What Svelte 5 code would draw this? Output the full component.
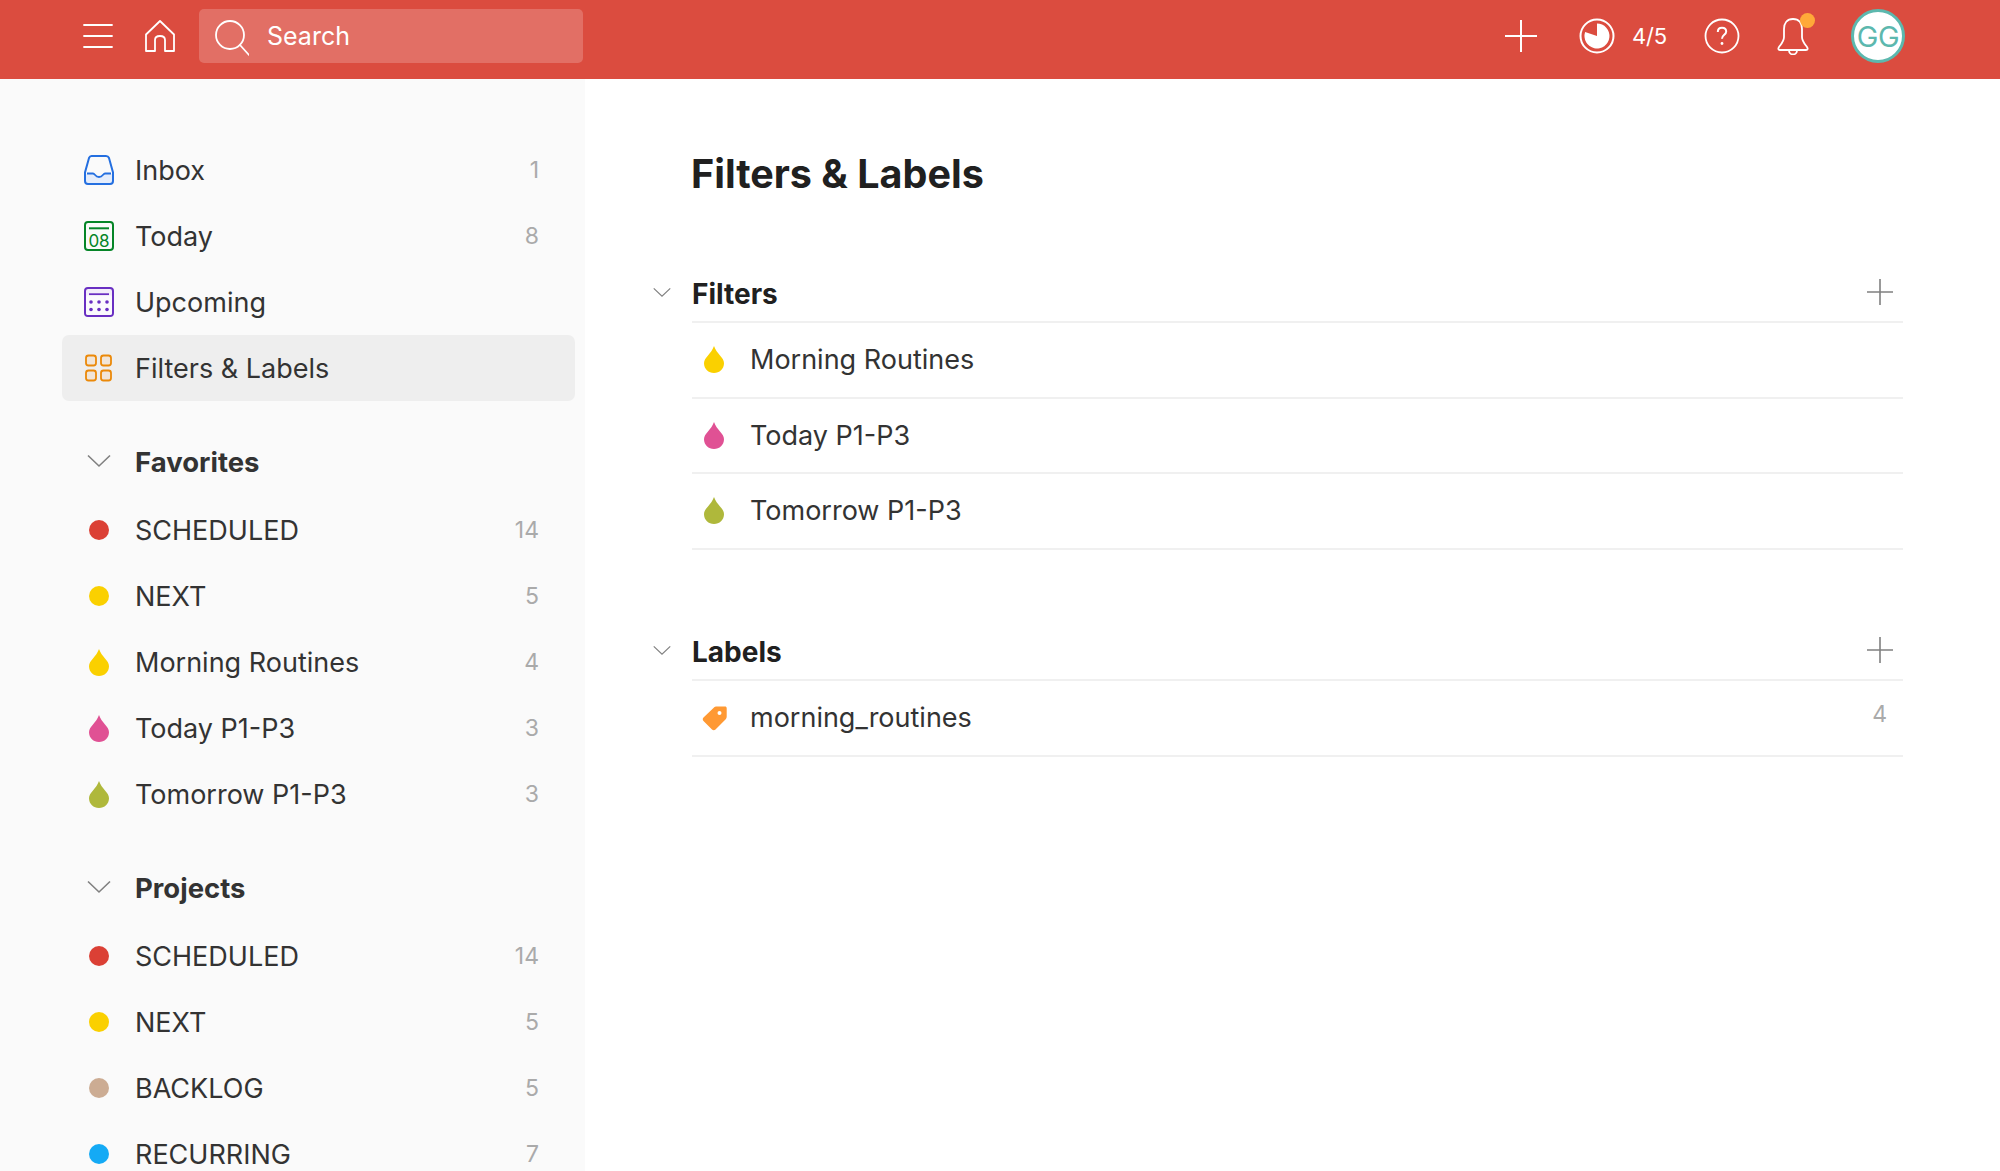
<script>
  const favorites = [
    { name: "SCHEDULED", color: "#db4035", shape: "dot", count: 14 },
    { name: "NEXT", color: "#fad000", shape: "dot", count: 5 },
    { name: "Morning Routines", color: "#fad000", shape: "drop", count: 4 },
    { name: "Today P1-P3", color: "#e05194", shape: "drop", count: 3 },
    { name: "Tomorrow P1-P3", color: "#afb83b", shape: "drop", count: 3 },
  ];
  const projects = [
    { name: "SCHEDULED", color: "#db4035", shape: "dot", count: 14 },
    { name: "NEXT", color: "#fad000", shape: "dot", count: 5 },
    { name: "BACKLOG", color: "#ccac93", shape: "dot", count: 5 },
    { name: "RECURRING", color: "#14aaf5", shape: "dot", count: 7 },
  ];
  const filters = [
    { name: "Morning Routines", color: "#fad000" },
    { name: "Today P1-P3", color: "#e05194" },
    { name: "Tomorrow P1-P3", color: "#afb83b" },
  ];
  const groups = [
    { title: "Favorites", items: favorites },
    { title: "Projects", items: projects },
  ];
</script>

{#snippet drop(color)}
  <svg class="drop" viewBox="0 0 20 27" fill={color}>
    <path d="M10 0C11.5 4 13.6 6.6 16 9.4 18.4 12.2 20 14.200 20 17.200 20 22.800 15.500 27 10 27 4.500 27 0 22.800 0 17.200 0 14.200 1.600 12.200 4 9.400 6.400 6.600 8.500 4 10 0Z" />
  </svg>
{/snippet}

{#snippet chevron()}
  <svg class="chev" viewBox="0 0 24 14" fill="none" stroke="#808080" stroke-width="1.600">
    <path d="M1 1.500l11 10.500 11-10.500" />
  </svg>
{/snippet}

{#snippet plus(cls, color)}
  <svg class={cls} viewBox="0 0 26 26" fill="none" stroke={color} stroke-width="1.600">
    <path d="M13 0v26M0 13h26" />
  </svg>
{/snippet}

<div class="app">
  <header class="topbar">
    <svg class="hamburger" viewBox="0 0 30 26" fill="none" stroke="#fff" stroke-width="1.800" stroke-linecap="round">
      <path d="M1 2h28M1 13h28M1 24h28" />
    </svg>
    <svg class="home" viewBox="0 0 30 32" fill="none" stroke="#fff" stroke-width="1.800" stroke-linejoin="round">
      <path d="M1 14.500L15 1l14 13.500V31H20V20c0-2.500-2-4-5-4s-5 1.500-5 4v11H1z" />
    </svg>
    <div class="search">
      <svg class="search-icon" viewBox="0 0 34 36" fill="none" stroke="#fff" stroke-width="1.800" stroke-linecap="round">
        <circle cx="15" cy="15" r="14" />
        <path d="M25 25l9 10" />
      </svg>
      <span>Search</span>
    </div>
    <div class="top-right">
      {@render plus("top-plus", "#fff")}
      <svg class="progress" viewBox="0 0 36 36">
        <circle cx="18" cy="18" r="16.500" fill="none" stroke="#fff" stroke-width="2" />
        <path d="M18 18V5.500A12.500 12.500 0 1 1 6.100 14.100z" fill="#fff" />
      </svg>
      <span class="karma">4/5</span>
      <svg class="help" viewBox="0 0 36 36">
        <circle cx="18" cy="18" r="16.500" fill="none" stroke="#fff" stroke-width="1.800" />
        <path d="M13.800 14c0-2.700 1.800-4.200 4.200-4.200 2.500 0 4.200 1.500 4.200 3.700 0 3.400-4.200 3.300-4.200 7.300" fill="none" stroke="#fff" stroke-width="2" />
        <circle cx="18" cy="25.500" r="1.400" fill="#fff" />
      </svg>
      <div class="bell-wrap">
        <svg class="bell" viewBox="0 0 34 38" fill="none" stroke="#fff" stroke-width="1.800" stroke-linejoin="round">
          <path d="M17 2c-6 0-9 4-9 10v8c0 4-2 6-5 10-1 1.500-1 3 1 3h26c2 0 2-1.500 1-3-3-4-5-6-5-10v-8c0-6-3-10-9-10z" />
          <path d="M13 33.500c0 2.500 2 4 4 4s4-1.500 4-4" />
        </svg>
        <span class="bell-dot"></span>
      </div>
      <div class="avatar">GG</div>
    </div>
  </header>

  <div class="body">
    <aside class="sidebar">
      <nav class="primary">
        <div class="row">
          <svg class="nav-icon" viewBox="0 0 32 32">
            <path d="M3 20h7c1.500 0 2 3.200 6 3.200s4.500-3.200 6-3.200h7v7c0 1.500-1 3-3 3H5c-2 0-2-1.500-2-3z" fill="#e5edfb" />
            <path d="M8.500 2h14.500c1.500 0 2.500.8 3 2l4 14.500V27c0 2-1.500 3-3 3H5c-1.500 0-3-1-3-3v-8.500L6 4c.5-1.200 1-2 2.500-2z" fill="none" stroke="#246fe0" stroke-width="2" />
            <path d="M4 19.500h6c2 0 2 3.500 6 3.500s4-3.500 6-3.500h6" fill="none" stroke="#246fe0" stroke-width="1.800" />
          </svg>
          <span class="label">Inbox</span><span class="count">1</span>
        </div>
        <div class="row">
          <svg class="nav-icon" viewBox="0 0 32 32">
            <rect x="2" y="2" width="28" height="28" rx="3" fill="none" stroke="#058527" stroke-width="2" />
            <path d="M6 8.300h20" stroke="#058527" stroke-width="2" />
            <text x="16" y="26.500" text-anchor="middle" class="cal-num">08</text>
          </svg>
          <span class="label">Today</span><span class="count">8</span>
        </div>
        <div class="row">
          <svg class="nav-icon" viewBox="0 0 32 32">
            <rect x="2" y="2" width="28" height="28" rx="3" fill="#f3eefa" stroke="#692fc2" stroke-width="2" />
            <path d="M6 8.300h20" stroke="#692fc2" stroke-width="2" />
            <rect x="3" y="9.300" width="26" height="19.700" rx="2" fill="#fbfafd" />
            <g fill="#692fc2">
              <circle cx="8" cy="16" r="1.800" /><circle cx="16" cy="16" r="1.800" /><circle cx="24" cy="16" r="1.800" />
              <circle cx="8" cy="23.500" r="1.800" /><circle cx="16" cy="23.500" r="1.800" /><circle cx="24" cy="23.500" r="1.800" />
            </g>
          </svg>
          <span class="label">Upcoming</span><span class="count"></span>
        </div>
        <div class="row selected">
          <svg class="nav-icon" viewBox="0 0 32 32" fill="#f1e5d8" stroke="#eb8909" stroke-width="1.800">
            <rect x="3" y="3.500" width="10" height="10" rx="2.500" /><rect x="18" y="3.500" width="10" height="10" rx="2.500" />
            <rect x="3" y="18.500" width="10" height="10" rx="2.500" /><rect x="18" y="18.500" width="10" height="10" rx="2.500" />
          </svg>
          <span class="label">Filters &amp; Labels</span><span class="count"></span>
        </div>
      </nav>

      {#each groups as group}
        <section class="group">
          <div class="row group-head">
            <span class="icon-slot">{@render chevron()}</span>
            <span class="label strong">{group.title}</span>
          </div>
          {#each group.items as item}
            <div class="row">
              <span class="icon-slot">
                {#if item.shape === "dot"}
                  <span class="dot" style="background:{item.color}"></span>
                {:else}
                  {@render drop(item.color)}
                {/if}
              </span>
              <span class="label">{item.name}</span>
              <span class="count">{item.count}</span>
            </div>
          {/each}
        </section>
      {/each}
    </aside>

    <main class="main">
      <h1>Filters &amp; Labels</h1>

      <section class="panel">
        <div class="panel-head">
          <span class="panel-chev">{@render chevron()}</span>
          <h2>Filters</h2>
          {@render plus("panel-plus", "#808080")}
        </div>
        {#each filters as f}
          <div class="item">
            <span class="item-icon">{@render drop(f.color)}</span>
            <span class="item-name">{f.name}</span>
          </div>
        {/each}
      </section>

      <section class="panel">
        <div class="panel-head">
          <span class="panel-chev">{@render chevron()}</span>
          <h2>Labels</h2>
          {@render plus("panel-plus", "#808080")}
        </div>
        <div class="item">
          <span class="item-icon">
            <svg class="tag" viewBox="0 0 26 26">
              <path d="M1.500 12.500L12 2.500c.8-.8 1.600-1 2.600-1H23c1 0 1.700.7 1.700 1.700v8.500c0 1-.3 1.800-1 2.500L13.500 24.500c-1 1-2.500 1-3.500 0l-8.500-8.500c-1-1-1-2.500 0-3.500z" fill="#ff9933" />
              <circle cx="17.500" cy="8" r="2" fill="#fff" />
            </svg>
          </span>
          <span class="item-name">morning_routines</span>
          <span class="item-count">4</span>
        </div>
      </section>
    </main>
  </div>
</div>

<style>
  :global(body) {
    margin: 0;
    background: #fff;
  }
  .app {
    height: 1171px;
    overflow: hidden;
    display: flex;
    flex-direction: column;
    font-family: Inter, "Liberation Sans", sans-serif;
    color: #202020;
  }

  /* top bar */
  .topbar {
    flex: 0 0 79px;
    background: #db4c3f;
    display: flex;
    align-items: center;
    padding: 0 95px 7px 83px;
    box-sizing: border-box;
    color: #fff;
  }
  .hamburger {
    width: 30px;
    height: 26px;
  }
  .home {
    width: 30px;
    height: 32px;
    margin-left: 32px;
  }
  .search {
    width: 384px;
    height: 54px;
    margin-left: 24px;
    padding-left: 16px;
    box-sizing: border-box;
    display: flex;
    align-items: center;
    gap: 18px;
    background: rgba(255, 255, 255, 0.2);
    border-radius: 5px;
    font-size: 25px;
  }
  .search-icon {
    width: 34px;
    height: 36px;
    margin-top: 3px;
  }
  .top-right {
    margin-left: auto;
    display: flex;
    align-items: center;
  }
  :global(.top-plus) {
    width: 32px;
    height: 32px;
  }
  .progress {
    width: 36px;
    height: 36px;
    margin-left: 42px;
  }
  .karma {
    margin-left: 17px;
    font-size: 22px;
    letter-spacing: -0.2px;
  }
  .help {
    width: 36px;
    height: 36px;
    margin-left: 37px;
  }
  .bell-wrap {
    position: relative;
    width: 34px;
    height: 38px;
    margin-left: 36px;
  }
  .bell {
    width: 34px;
    height: 38px;
  }
  .bell-dot {
    position: absolute;
    top: -4px;
    right: -5px;
    width: 15px;
    height: 15px;
    border-radius: 50%;
    background: #ffa939;
  }
  .avatar {
    width: 54px;
    height: 54px;
    margin-left: 41px;
    box-sizing: border-box;
    border: 3px solid #5cb8ae;
    border-radius: 50%;
    background: #fff;
    color: #5cb8ae;
    font-size: 29px;
    letter-spacing: -0.5px;
    display: flex;
    align-items: center;
    justify-content: center;
  }

  .body {
    flex: 1;
    display: flex;
    min-height: 0;
  }

  /* sidebar */
  .sidebar {
    flex: 0 0 585px;
    box-sizing: border-box;
    background: #fafafa;
    padding: 58px 10px 0 62px;
    overflow: hidden;
  }
  .row {
    height: 66px;
    display: flex;
    align-items: center;
    padding: 0 36px 0 21px;
    border-radius: 7px;
    font-size: 27px;
  }
  .selected {
    background: #eee;
  }
  .nav-icon {
    width: 32px;
    height: 32px;
    flex: none;
  }
  .cal-num {
    font-family: Inter, sans-serif;
    font-size: 17px;
    fill: #058527;
  }
  .icon-slot {
    width: 32px;
    flex: none;
    display: flex;
    justify-content: center;
  }
  .label {
    margin-left: 20px;
    flex: 1;
    color: #333;
  }
  .strong {
    font-size: 27.500px;
    font-weight: 700;
    color: #333;
  }
  .count {
    font-size: 23px;
    color: #aaa;
  }
  .group {
    margin-top: 28px;
  }
  .group-head {
    margin-bottom: 2px;
  }
  .group-head .icon-slot {
    margin-top: -2px;
  }
  .dot {
    width: 20px;
    height: 20px;
    border-radius: 50%;
  }
  .drop {
    width: 20px;
    height: 27px;
    display: block;
  }
  .chev {
    width: 24px;
    height: 14px;
    display: block;
  }

  /* main */
  .main {
    flex: 1;
    padding: 67px 97px 0 107px;
    min-width: 0;
  }
  h1 {
    margin: 0 0 0 -1px;
    font-size: 39.500px;
    line-height: 56px;
    font-weight: 700;
    color: #202020;
  }
  .panel {
    margin-top: 64px;
  }
  .panel + .panel {
    margin-top: 74.500px;
  }
  .panel-head {
    display: flex;
    align-items: center;
    height: 55px;
    border-bottom: 2px solid #f0f0f0;
    padding-right: 10px;
  }
  .panel-chev {
    margin-left: -39px;
    width: 39px;
    flex: none;
  }
  .panel-chev :global(.chev) {
    width: 18px;
    height: 11px;
    margin-top: -2px;
  }
  h2 {
    margin: 0;
    flex: 1;
    font-size: 28px;
    font-weight: 700;
  }
  :global(.panel-plus) {
    width: 26px;
    height: 26px;
    margin-bottom: 3px;
  }
  .item {
    height: 73.500px;
    display: flex;
    align-items: center;
    border-bottom: 2px solid #f0f0f0;
    padding-right: 16px;
  }
  .item-icon {
    width: 58px;
    padding-left: 12px;
    box-sizing: border-box;
    flex: none;
    display: flex;
  }
  .item-name {
    flex: 1;
    font-size: 27px;
    color: #333;
  }
  .item-count {
    font-size: 23px;
    color: #aaa;
    margin-bottom: 8px;
  }
  .tag {
    width: 26px;
    height: 26px;
    margin-left: -2px;
  }
</style>
